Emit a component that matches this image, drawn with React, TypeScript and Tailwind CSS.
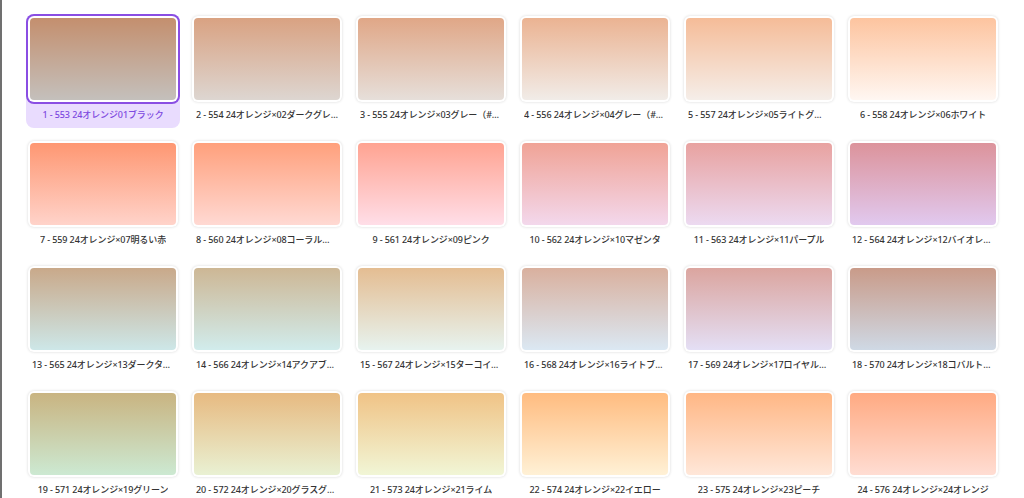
const items: { label: string; from: string; to: string }[] = [
  { label: "1 - 553 24オレンジ01ブラック", from: "#c48f6e", to: "#c4c0bc" },
  { label: "2 - 554 24オレンジ×02ダークグレー（#333333）", from: "#d9a282", to: "#ddd6d1" },
  { label: "3 - 555 24オレンジ×03グレー（#808080）", from: "#e0a787", to: "#e6dfda" },
  { label: "4 - 556 24オレンジ×04グレー（#999999）", from: "#ebb392", to: "#f1ece8" },
  { label: "5 - 557 24オレンジ×05ライトグレー（#cccccc）", from: "#f5bc98", to: "#f5eee9" },
  { label: "6 - 558 24オレンジ×06ホワイト", from: "#fdc49f", to: "#fff7f2" },
  { label: "7 - 559 24オレンジ×07明るい赤", from: "#fe9772", to: "#ffd3ca" },
  { label: "8 - 560 24オレンジ×08コーラルレッド", from: "#ffa07c", to: "#ffd9d3" },
  { label: "9 - 561 24オレンジ×09ピンク", from: "#ffa391", to: "#ffdee8" },
  { label: "10 - 562 24オレンジ×10マゼンタ", from: "#f0a396", to: "#f3d8ec" },
  { label: "11 - 563 24オレンジ×11パープル", from: "#e8a2a0", to: "#ecdaf1" },
  { label: "12 - 564 24オレンジ×12バイオレット", from: "#dc939b", to: "#e1c9ef" },
  { label: "13 - 565 24オレンジ×13ダークターコイズ", from: "#c9a98a", to: "#cde7e8" },
  { label: "14 - 566 24オレンジ×14アクアブルー", from: "#cdb795", to: "#d1ecec" },
  { label: "15 - 567 24オレンジ×15ターコイズブルー", from: "#e4bd92", to: "#e7f3ef" },
  { label: "16 - 568 24オレンジ×16ライトブルー", from: "#d9b09e", to: "#dbe8f3" },
  { label: "17 - 569 24オレンジ×17ロイヤルブルー", from: "#dba59f", to: "#e4dff5" },
  { label: "18 - 570 24オレンジ×18コバルトブルー", from: "#c99b89", to: "#cfd9e5" },
  { label: "19 - 571 24オレンジ×19グリーン", from: "#c9b481", to: "#cce9d2" },
  { label: "20 - 572 24オレンジ×20グラスグリーン", from: "#e7ba81", to: "#e9f1d3" },
  { label: "21 - 573 24オレンジ×21ライム", from: "#f0c386", to: "#f1f6d6" },
  { label: "22 - 574 24オレンジ×22イエロー", from: "#ffbc80", to: "#fff1d6" },
  { label: "23 - 575 24オレンジ×23ピーチ", from: "#ffb785", to: "#ffe7d9" },
  { label: "24 - 576 24オレンジ×24オレンジ", from: "#ffaa82", to: "#ffddd3" },
];

function Card({ label, from, to, selected }: { label: string; from: string; to: string; selected: boolean }) {
  return (
    <div
      className={
        "flex w-[150px] flex-col rounded-md " +
        (selected ? "bg-[#e9dcfe] shadow-[0_0_0_2px_#e9dcfe]" : "")
      }
    >
      <div
        className={
          "h-[86px] rounded-md bg-white p-[2px] " +
          (selected
            ? "shadow-[0_0_0_2px_#8a4ee3]"
            : "shadow-[0_0_3px_rgba(0,0,0,0.16)]")
        }
      >
        <div
          className="h-full w-full rounded-[4px]"
          style={{ backgroundImage: `linear-gradient(to bottom, ${from}, ${to})` }}
        />
      </div>
      <div
        className={
          "flex h-[24px] items-center justify-center px-[4px] text-[9px] font-medium leading-none tracking-[-0.1px] " +
          (selected ? "text-[#7d49e0]" : "text-[#333333]")
        }
      >
        <span className="truncate">{label}</span>
      </div>
    </div>
  );
}

export default function App() {
  return (
    <main
      className="h-[498px] w-[1024px] overflow-hidden border-l-2 border-[#707070] bg-white"
      style={{ fontFamily: '"Noto Sans", "Noto Sans CJK JP", sans-serif' }}
    >
      <div className="grid grid-cols-[repeat(6,150px)] gap-x-[14px] gap-y-[15px] pl-[26px] pt-[16px]">
        {items.map((it, i) => (
          <Card key={i} {...it} selected={i === 0} />
        ))}
      </div>
    </main>
  );
}
